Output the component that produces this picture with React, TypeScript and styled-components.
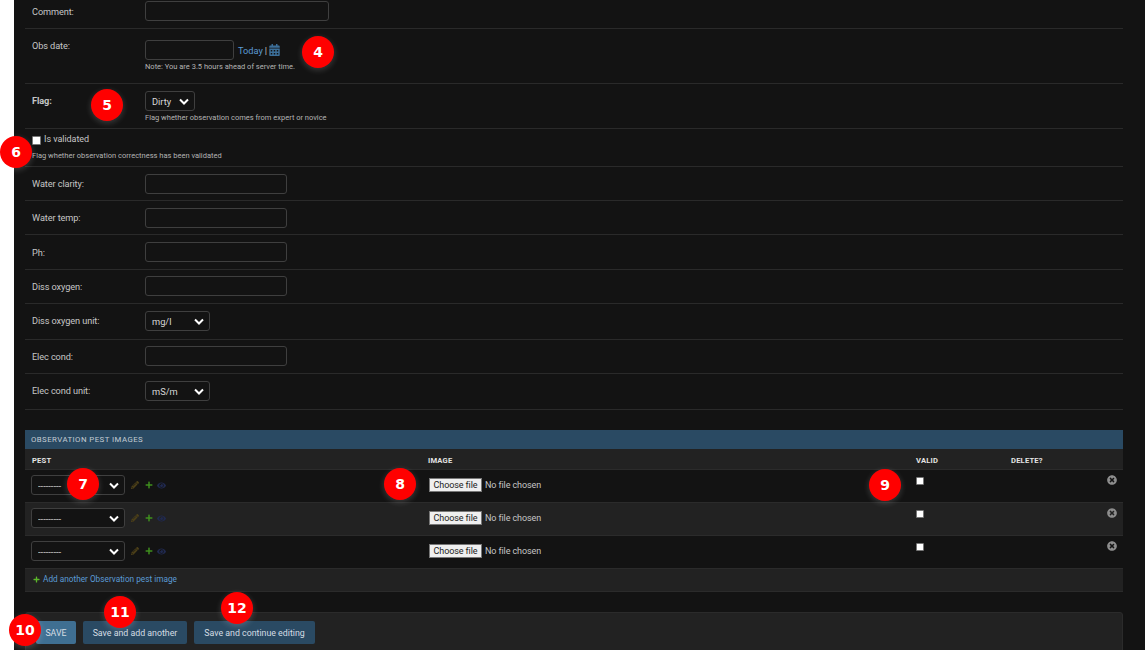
import React from 'react'
import styled, { createGlobalStyle } from 'styled-components'
import { FaCalendarAlt, FaEye, FaPencilAlt, FaPlus, FaTimesCircle } from 'react-icons/fa'

const chevron =
  "url(\"data:image/svg+xml,%3Csvg xmlns='http://www.w3.org/2000/svg' viewBox='0 0 10 7'%3E%3Cpath d='M1 1.5l4 4 4-4' fill='none' stroke='%23fff' stroke-width='2'/%3E%3C/svg%3E\")"

const font = 'Roboto, "Noto Sans", sans-serif'

const GlobalStyle = createGlobalStyle`
    html, body {
        margin : 0;
        height : 650px;
        overflow : hidden;
        background : #fff;
    }
    body {
        font-family : ${font};
    }
`

const Page = styled.div`
    position : relative;
    margin-left : 14px;
    height : 650px;
    padding : 0 22px 0 11px;
    background : #131313;
    color : #c6c6c6;
`

const Row = styled.div<{ $height: number; $top?: number }>`
    display : flex;
    align-items : flex-start;
    box-sizing : border-box;
    height : ${p => p.$height}px;
    padding : ${p => p.$top ?? 7}px 0 0 7px;
    border-bottom : 1px solid #2a2a2a;
`

const CheckRow = styled(Row)`
    display : block;
`

const Label = styled.label<{ $bold?: boolean; $shift?: number }>`
    flex : 0 0 113px;
    margin-top : ${p => p.$shift ?? 1}px;
    font-size : 9.2px;
    letter-spacing : -0.1px;
    line-height : 18px;
    font-weight : ${p => (p.$bold ? 700 : 400)};
`

const Field = styled.div`
    display : flex;
    flex-direction : column;
`

const Inline = styled.div`
    display : flex;
    align-items : center;
    font-size : 9.2px;
`

const TextInput = styled.input<{ $width: number }>`
    box-sizing : border-box;
    width : ${p => p.$width}px;
    height : 20px;
    padding : 0 6px;
    background : #131313;
    border : 1px solid #3f3f3f;
    border-radius : 3px;
`

const Select = styled.select<{ $width: number }>`
    appearance : none;
    box-sizing : border-box;
    width : ${p => p.$width}px;
    height : 20px;
    padding : 0 6px;
    background : #131313 ${chevron} no-repeat right 5px center / 10px 7px;
    border : 1px solid #3f3f3f;
    border-radius : 3px;
    color : #d8d8d8;
    font-family : ${font};
    font-size : 9.3px;
`

const Help = styled.div<{ $top: number }>`
    margin-top : ${p => p.$top}px;
    font-size : 7.5px;
    line-height : 10px;
    color : #b4b4b4;
`

const TodayLink = styled.a`
    margin-left : 4px;
    color : #5b9bd5;
`

const Separator = styled.span`
    margin : 0 2px;
`

const CalendarIcon = styled(FaCalendarAlt)`
    width : 11px;
    height : 12px;
    color : #3c6f99;
`

const CheckLine = styled.div`
    display : flex;
    align-items : flex-start;
    padding-top : 1px;
    font-size : 9px;
    letter-spacing : -0.05px;
    line-height : 13px;
`

const Check = styled.span<{ $size: number }>`
    display : block;
    flex : none;
    box-sizing : border-box;
    width : ${p => p.$size}px;
    height : ${p => p.$size}px;
    background : #fff;
    border : 1px solid #777;
    border-radius : 1px;
`

const ValidateCheck = styled(Check)`
    margin : 3px 3px 0 0;
`

const Group = styled.div`
    margin-top : 20px;
`

const GroupTitle = styled.div`
    height : 19px;
    padding-left : 6px;
    background : #2a4a63;
    color : #c3ccd3;
    font-size : 7.8px;
    line-height : 19px;
    letter-spacing : 0.45px;
    text-transform : uppercase;
`

const columns = 'grid-template-columns : 396px 488px 95px 1fr;'

const HeadRow = styled.div`
    display : grid;
    ${columns}
    height : 21px;
    box-sizing : border-box;
    background : #222;
    border-bottom : 1px solid #2b2b2b;
    color : #e4e4e4;
    font-size : 7.6px;
    font-weight : 700;
    line-height : 23px;
    letter-spacing : 0.2px;
    text-transform : uppercase;
`

const HeadCell = styled.div`
    padding-left : 7px;
`

const BodyRow = styled.div<{ $alt: boolean }>`
    display : grid;
    ${columns}
    box-sizing : border-box;
    height : 33px;
    background : ${p => (p.$alt ? '#222' : '#131313')};
    border-bottom : 1px solid #2b2b2b;
`

const PestCell = styled.div`
    display : flex;
    align-items : center;
    height : 30px;
    padding-left : 6px;
`

const ImageCell = styled.div`
    display : flex;
    align-items : center;
    height : 30px;
    padding-left : 8px;
    font-size : 9px;
    letter-spacing : -0.1px;
`

const FileButton = styled.button`
    box-sizing : border-box;
    width : 53px;
    height : 14px;
    margin-right : 3px;
    padding : 0;
    background : #efefef;
    border : 1px solid #777;
    color : #222;
    font-family : ${font};
    font-size : 9px;
    letter-spacing : -0.1px;
    line-height : 12px;
`

const ValidCell = styled.div`
    padding : 7px 0 0 7px;
`

const DeleteCell = styled.div`
    display : flex;
    justify-content : flex-end;
    padding : 5px 6px 0 0;
`

const DeleteIcon = styled(FaTimesCircle)`
    width : 10px;
    height : 10px;
    color : #8d8d8d;
`

const PencilIcon = styled(FaPencilAlt)`
    width : 8px;
    height : 8px;
    margin-left : 6px;
    color : #4d4018;
`

const PlusIcon = styled(FaPlus)`
    width : 8px;
    height : 8px;
    margin-left : 6px;
    color : #3f8f1e;
`

const EyeIcon = styled(FaEye)`
    width : 9px;
    height : 9px;
    margin-left : 4px;
    color : #20294f;
`

const AddRow = styled.div`
    display : flex;
    align-items : center;
    box-sizing : border-box;
    height : 23px;
    padding : 0 0 2px 8px;
    background : #222;
    border-bottom : 1px solid #2b2b2b;
    font-size : 8.25px;
    color : #5b9bd5;
`

const AddPlus = styled(FaPlus)`
    width : 7px;
    height : 7px;
    margin-right : 3px;
    color : #5cb82a;
`

const SubmitRow = styled.div`
    display : flex;
    gap : 7px;
    box-sizing : border-box;
    height : 60px;
    margin-top : 20px;
    padding : 8px 0 0 10px;
    background : #222;
    border : 1px solid #2b2b2b;
    border-radius : 3px;
`

const Button = styled.button<{ $width: number; $primary?: boolean }>`
    box-sizing : border-box;
    width : ${p => p.$width}px;
    height : 23px;
    padding : 0;
    background : ${p => (p.$primary ? '#3f6f92' : '#2a4a63')};
    border : none;
    border-radius : 2px;
    color : #d5dde3;
    font-family : ${font};
    font-size : 8.8px;
`

const Badge = styled.div<{ $x: number; $y: number }>`
    position : absolute;
    left : ${p => p.$x - 30}px;
    top : ${p => p.$y - 16}px;
    width : 32px;
    height : 32px;
    border-radius : 50%;
    background : #ff0000;
    box-shadow : 0 2px 6px rgba(255, 255, 255, 0.18);
    color : #fff;
    font-family : "DejaVu Sans", sans-serif;
    font-size : 14px;
    font-weight : 700;
    line-height : 32px;
    text-align : center;
`

const badges = [
    { n: 4, x: 318, y: 52 },
    { n: 5, x: 107, y: 105 },
    { n: 6, x: 16, y: 152 },
    { n: 7, x: 83, y: 484 },
    { n: 8, x: 400, y: 484 },
    { n: 9, x: 885, y: 485 },
    { n: 10, x: 25, y: 630 },
    { n: 11, x: 120, y: 612 },
    { n: 12, x: 237, y: 608 },
]

function App() {
    return (
        <Page>
            <GlobalStyle />

            <Row $height={29} $top={1}>
                <Label $shift={2}>Comment:</Label>
                <TextInput $width={184} />
            </Row>

            <Row $height={55} $top={11}>
                <Label $shift={-3}>Obs date:</Label>
                <Field>
                    <Inline>
                        <TextInput $width={89} />
                        <TodayLink>Today</TodayLink>
                        <Separator>|</Separator>
                        <CalendarIcon />
                    </Inline>
                    <Help $top={2}>Note: You are 3.5 hours ahead of server time.</Help>
                </Field>
            </Row>

            <Row $height={45}>
                <Label $bold $shift={1}>Flag:</Label>
                <Field>
                    <Select $width={50}><option>Dirty</option></Select>
                    <Help $top={2}>Flag whether observation comes from expert or novice</Help>
                </Field>
            </Row>

            <CheckRow $height={38} $top={3}>
                <CheckLine>
                    <ValidateCheck $size={9} />
                    Is validated
                </CheckLine>
                <Help $top={5}>Flag whether observation correctness has been validated</Help>
            </CheckRow>

            <Row $height={34}><Label>Water clarity:</Label><TextInput $width={142} /></Row>
            <Row $height={34}><Label>Water temp:</Label><TextInput $width={142} /></Row>
            <Row $height={35}><Label $shift={2}>Ph:</Label><TextInput $width={142} /></Row>
            <Row $height={34} $top={6}><Label $shift={2}>Diss oxygen:</Label><TextInput $width={142} /></Row>
            <Row $height={36}>
                <Label $shift={1}>Diss oxygen unit:</Label>
                <Select $width={65}><option>mg/l</option></Select>
            </Row>
            <Row $height={34} $top={6}><Label $shift={2}>Elec cond:</Label><TextInput $width={142} /></Row>
            <Row $height={36}>
                <Label $shift={1}>Elec cond unit:</Label>
                <Select $width={65}><option>mS/m</option></Select>
            </Row>

            <Group>
                <GroupTitle>Observation pest images</GroupTitle>
                <HeadRow>
                    <HeadCell>Pest</HeadCell>
                    <HeadCell>Image</HeadCell>
                    <HeadCell>Valid</HeadCell>
                    <HeadCell>Delete?</HeadCell>
                </HeadRow>
                {[0, 1, 2].map(i => (
                    <BodyRow key={i} $alt={i === 1}>
                        <PestCell>
                            <Select $width={94}><option>---------</option></Select>
                            <PencilIcon />
                            <PlusIcon />
                            <EyeIcon />
                        </PestCell>
                        <ImageCell>
                            <FileButton type="button">Choose file</FileButton>
                            No file chosen
                        </ImageCell>
                        <ValidCell><Check $size={8} /></ValidCell>
                        <DeleteCell><DeleteIcon /></DeleteCell>
                    </BodyRow>
                ))}
                <AddRow><AddPlus />Add another Observation pest image</AddRow>
            </Group>

            <SubmitRow>
                <Button $primary $width={40}>SAVE</Button>
                <Button $width={104}>Save and add another</Button>
                <Button $width={121}>Save and continue editing</Button>
            </SubmitRow>

            {badges.map(b => (
                <Badge key={b.n} $x={b.x} $y={b.y}>{b.n}</Badge>
            ))}
        </Page>
    )
}

export default App
